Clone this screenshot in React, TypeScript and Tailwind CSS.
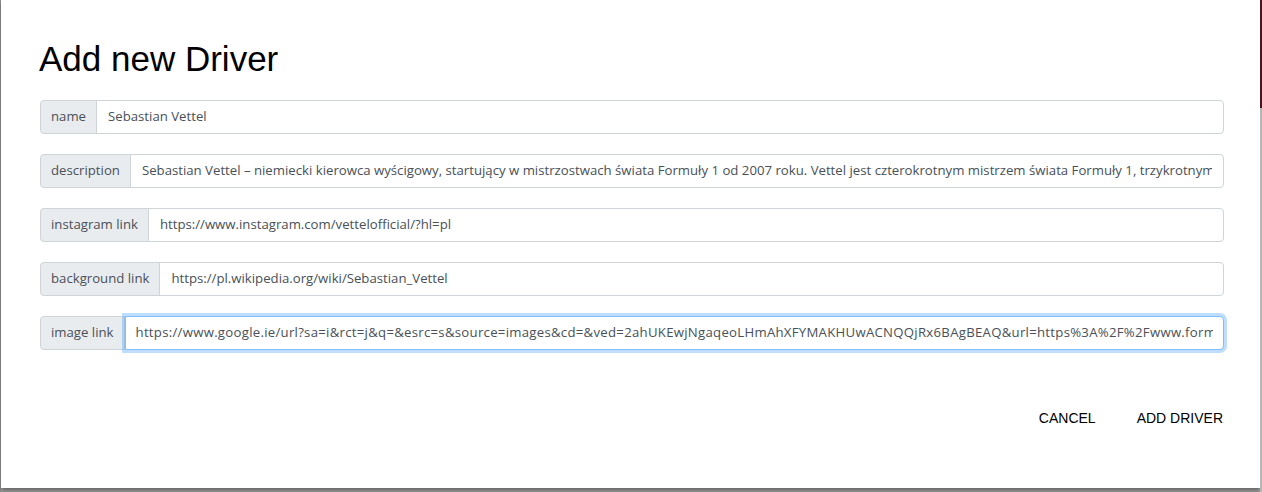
import React from 'react';

const fields = [
  { label: 'name', value: 'Sebastian Vettel' },
  {
    label: 'description',
    value:
      'Sebastian Vettel – niemiecki kierowca wyścigowy, startujący w mistrzostwach świata Formuły 1 od 2007 roku. Vettel jest czterokrotnym mistrzem świata Formuły 1, trzykrotnym wicemistrzem świata.',
  },
  { label: 'instagram link', value: 'https://www.instagram.com/vettelofficial/?hl=pl' },
  { label: 'background link', value: 'https://pl.wikipedia.org/wiki/Sebastian_Vettel' },
  {
    label: 'image link',
    value:
      'https://www.google.ie/url?sa=i&rct=j&q=&esrc=s&source=images&cd=&ved=2ahUKEwjNgaqeoLHmAhXFYMAKHUwACNQQjRx6BAgBEAQ&url=https%3A%2F%2Fwww.formula1.com',
    focused: true,
  },
];

function Field({ label, value, focused }: { label: string; value: string; focused?: boolean }) {
  return (
    <div className="flex h-[34px] w-full items-stretch">
      <span className="flex items-center rounded-l-[4px] border border-[#ced4da] bg-[#e9ecef] px-[10px] text-[13.2px] text-[#495057]">
        {label}
      </span>
      <input
        readOnly
        value={value}
        className={
          focused
            ? 'min-w-0 flex-1 rounded-r-[4px] border border-[#80bdff] bg-white px-[10px] text-[13.2px] tracking-[0.27px] text-[#495057] outline-none shadow-[0_0_0_3px_rgba(0,123,255,0.25)]'
            : '-ml-px min-w-0 flex-1 rounded-r-[4px] border border-[#ced4da] bg-white px-[11px] text-[13.2px] text-[#495057] outline-none'
        }
        style={{ fontFamily: "'Open Sans', 'Noto Sans', sans-serif" }}
      />
    </div>
  );
}

export default function App() {
  return (
    <div className="flex h-[492px] w-[1262px] overflow-hidden bg-[#a3a3a3]" style={{ fontFamily: "'Open Sans', 'Noto Sans', sans-serif" }}>
      <div className="w-px bg-[#8f8f8f]" />
      <div className="flex h-[488px] w-[1259px] flex-col bg-white shadow-[0_3px_4px_rgba(0,0,0,0.35)]">
        <h2
          className="ml-[38px] mt-[34px] text-[35px] leading-[50px] text-black"
          style={{ fontFamily: "'Liberation Sans', Arial, sans-serif" }}
        >
          Add new Driver
        </h2>
        <div className="ml-[39px] mt-[16px] flex w-[1184px] flex-col gap-[20px]">
          {fields.map((f) => (
            <Field key={f.label} {...f} />
          ))}
        </div>
        <div
          className="mr-[37px] mt-[58px] flex justify-end gap-[41px] text-[14px] text-black"
          style={{ fontFamily: "'Liberation Sans', Arial, sans-serif" }}
        >
          <button className="uppercase leading-[20px]">Cancel</button>
          <button className="uppercase leading-[20px]">Add Driver</button>
        </div>
      </div>
      <div className="flex w-[2px] flex-col">
        <div className="h-[108px] bg-[#4b1520]" />
        <div className="flex-1 bg-[#b5b5b5]" />
      </div>
    </div>
  );
}
